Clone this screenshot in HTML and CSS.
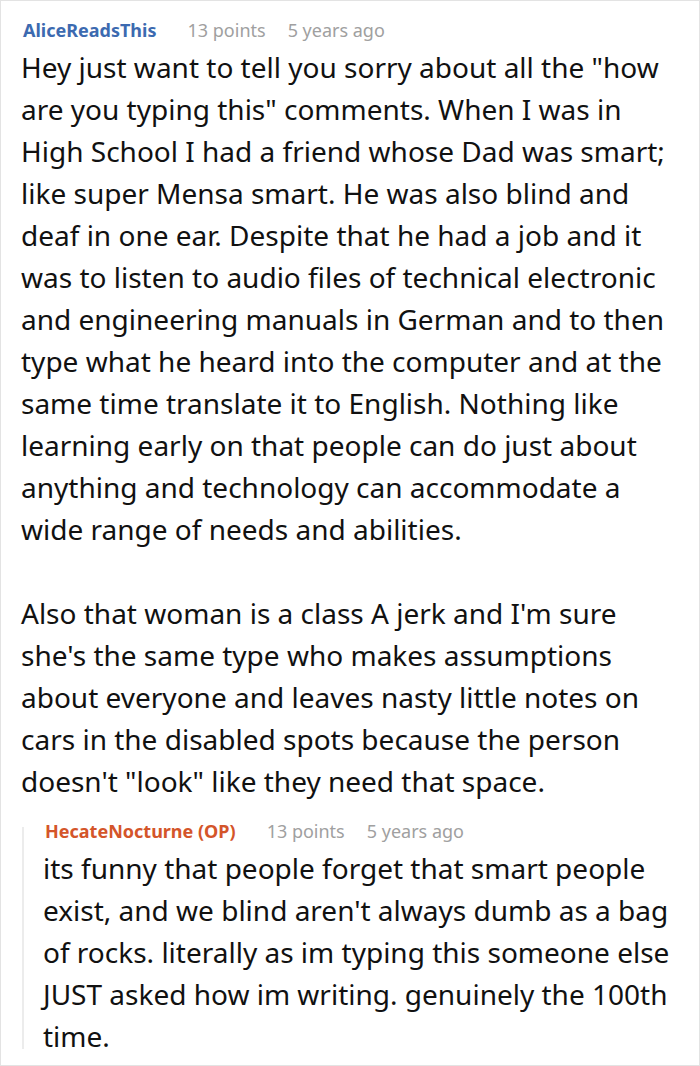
FILE: index.html
```html
<!DOCTYPE html>
<html>
<head>
<meta charset="utf-8">
<link rel="stylesheet" href="styles.css">
</head>
<body>
<div class="thread">
  <div class="comment">
    <div class="meta">
      <span class="author">AliceReadsThis</span>
      <span class="points">13 points</span>
      <span class="time">5 years ago</span>
    </div>
    <div class="text">
      <p>Hey just want to tell you sorry about all the "how are you typing this" comments. When I was in High School I had a friend whose Dad was smart; like super Mensa smart. He was also blind and deaf in one ear. Despite that he had a job and it was to listen to audio files of technical electronic and engineering manuals in German and to then type what he heard into the computer and at the same time translate it to English. Nothing like learning early on that people can do just about anything and technology can accommodate a wide range of needs and abilities.</p>
      <p>Also that woman is a class A jerk and I'm sure she's the same type who makes assumptions about everyone and leaves nasty little notes on cars in the disabled spots because the person doesn't "look" like they need that space.</p>
    </div>
    <div class="reply">
      <div class="meta">
        <span class="author op">HecateNocturne (OP)</span>
        <span class="points">13 points</span>
        <span class="time">5 years ago</span>
      </div>
      <div class="text">
        <p>its funny that people forget that smart people exist, and we blind aren't always dumb as a bag of rocks. literally as im typing this someone else JUST asked how im writing. genuinely the 100th time.</p>
      </div>
    </div>
  </div>
</div>
</body>
</html>
```
FILE: styles.css
```css
html, body {
  margin: 0;
  padding: 0;
  background: #fff;
}
.thread {
  width: 700px;
  height: 1066px;
  box-sizing: border-box;
  border: 1px solid #e3e3e3;
  padding: 17px 20px 0 20px;
  font-family: "Noto Sans", "Open Sans", sans-serif;
  color: #111;
  overflow: hidden;
}
.meta {
  display: flex;
  align-items: center;
  height: 24px;
  line-height: 24px;
  font-size: 18px;
}
.author {
  font-weight: bold;
  color: #3c6ab0;
  margin-left: 2px;
  margin-right: 31px;
}
.author.op {
  color: #d4552a;
}
.points {
  color: #a0a0a0;
  margin-right: 22px;
}
.time {
  color: #a0a0a0;
}
.text {
  font-size: 28px;
  line-height: 42px;
  margin-top: 4px;
}
.text p {
  margin: 0 0 42px 0;
}
.text p:last-child {
  margin-bottom: 0;
}
.reply {
  position: relative;
  margin-top: 17px;
  padding-left: 22px;
}
.reply::before {
  content: "";
  position: absolute;
  left: 1px;
  top: 8px;
  bottom: 8px;
  width: 2px;
  background: #ececec;
}
```
